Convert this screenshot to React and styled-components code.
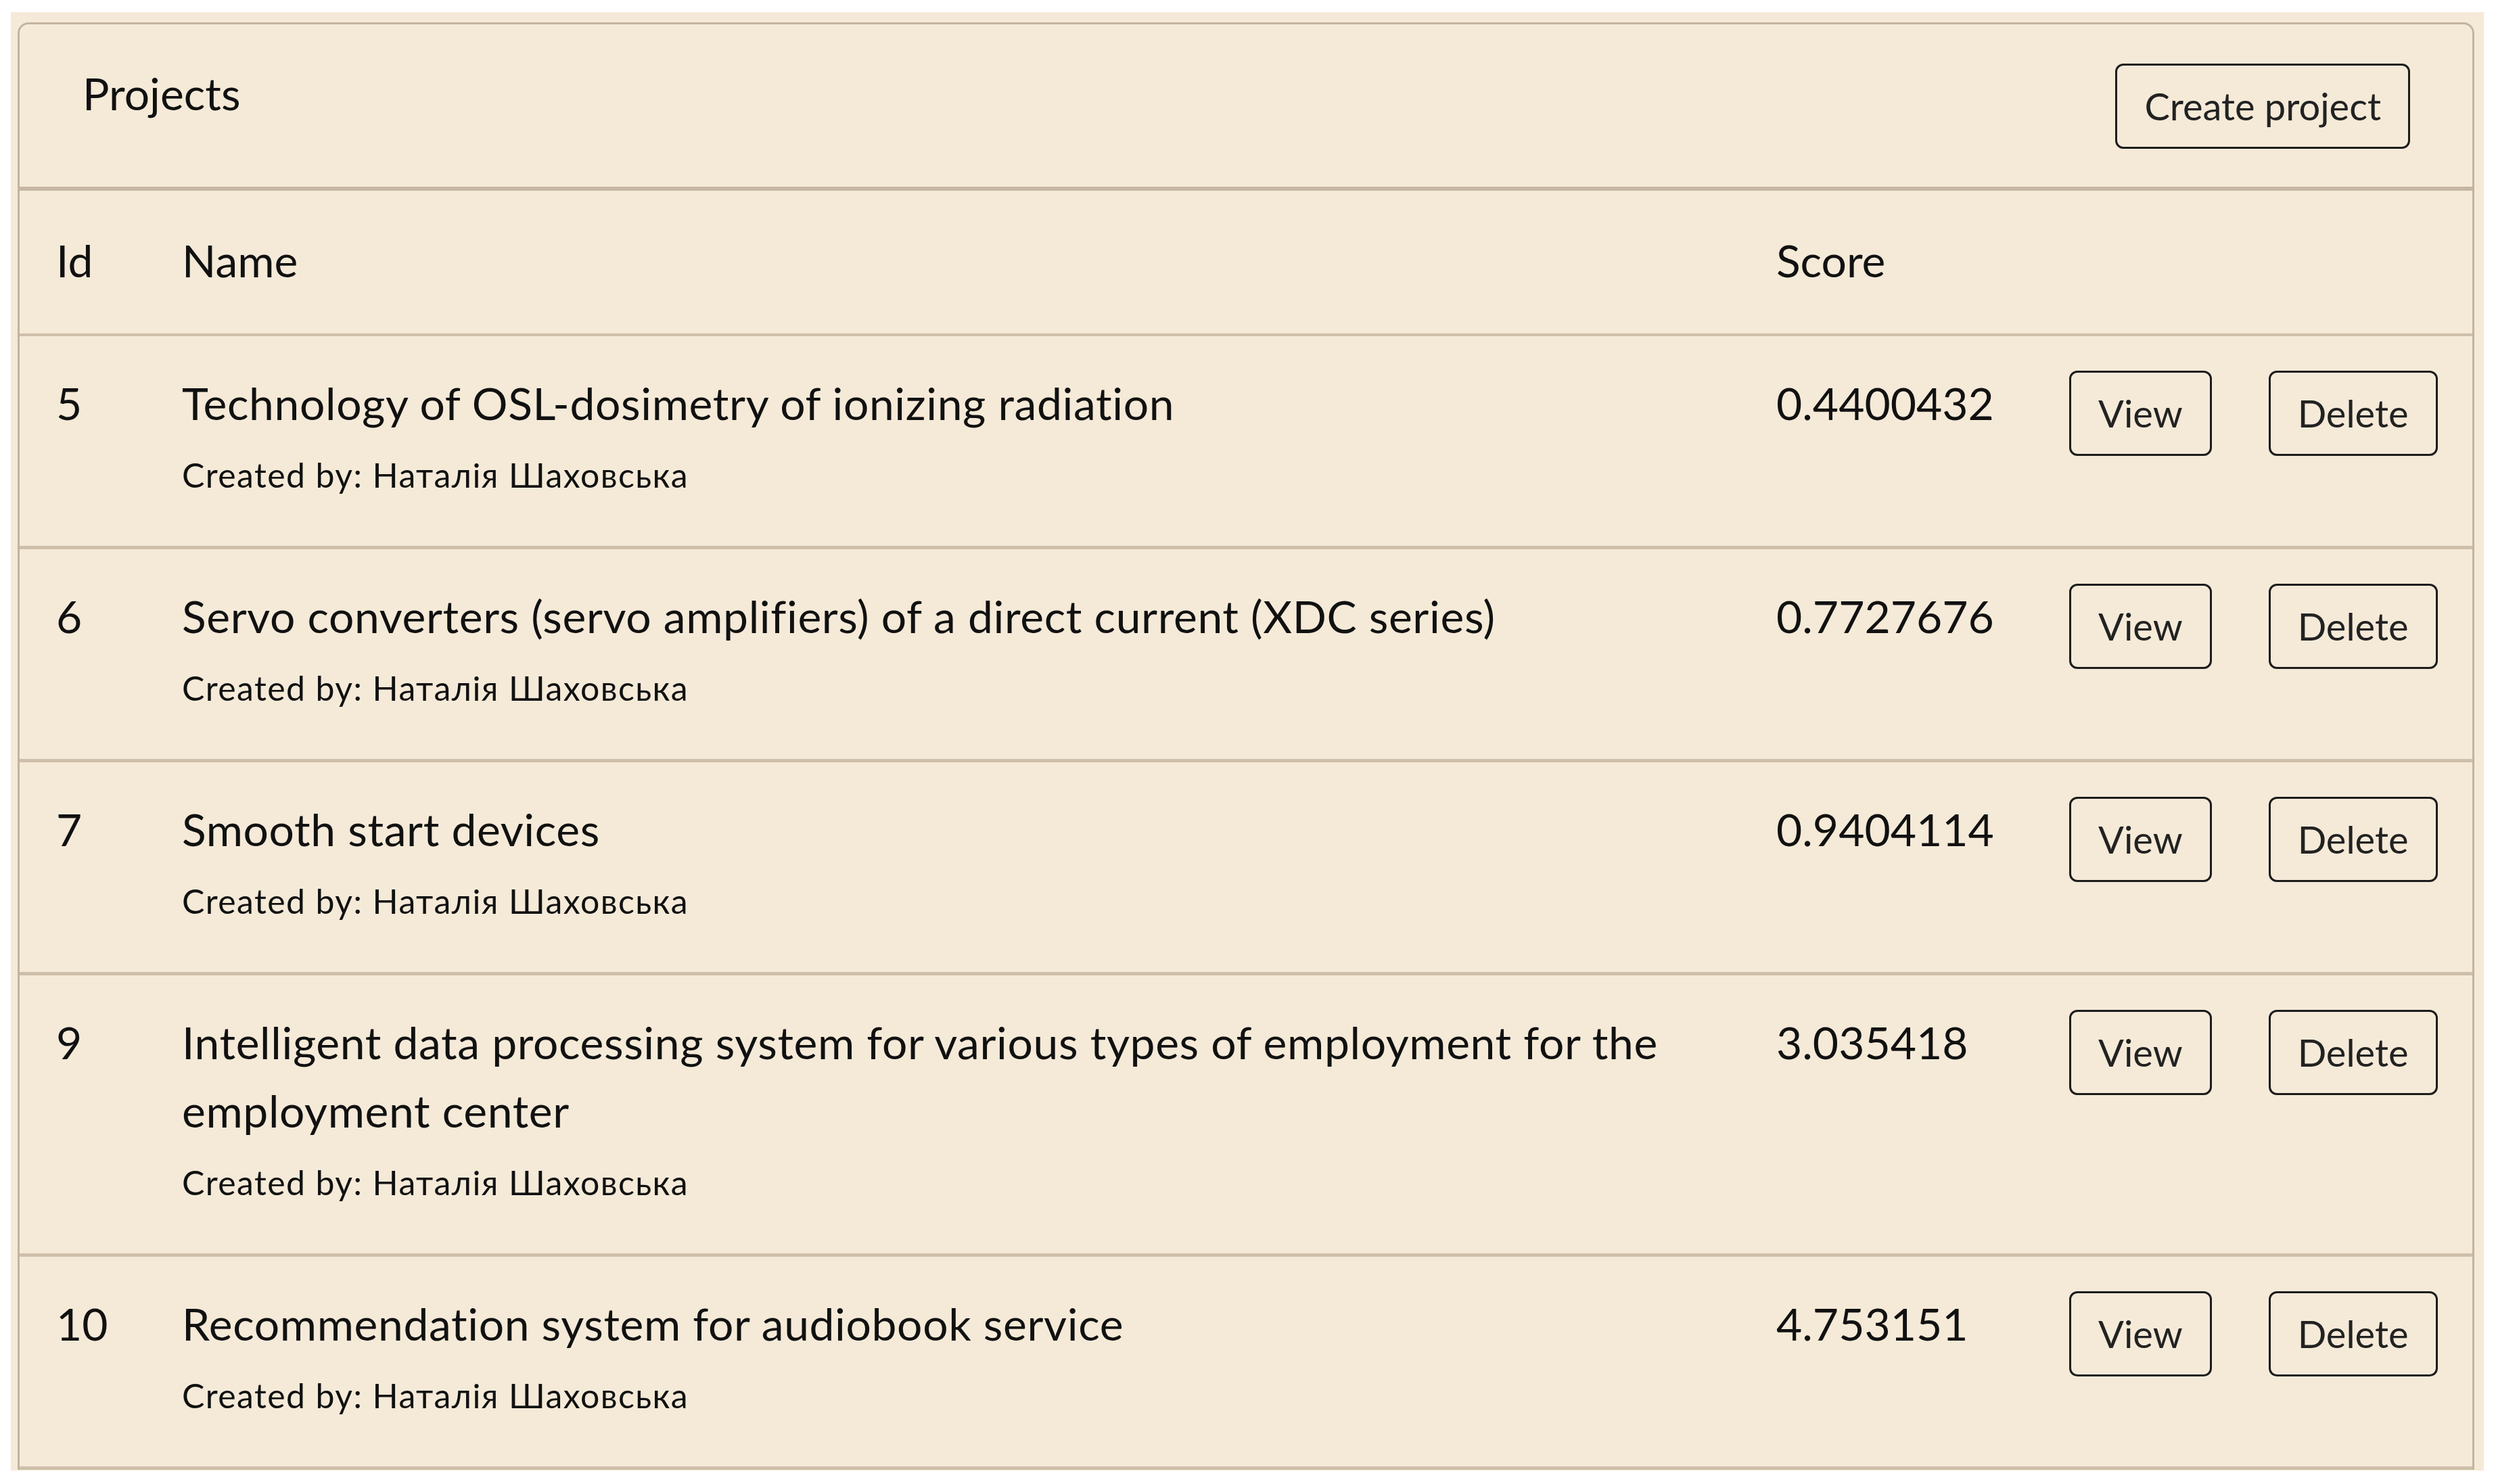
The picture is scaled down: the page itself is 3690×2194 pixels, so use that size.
import styled, { createGlobalStyle } from "styled-components";

const GlobalStyle = createGlobalStyle`
  * {
    box-sizing: border-box;
  }
  html,
  body {
    margin: 0;
    padding: 0;
    background: #ffffff;
  }
  body {
    font-family: "Lato", "Open Sans", "Noto Sans", sans-serif;
    color: #111111;
  }
`;

const Page = styled.div`
  margin: 18px 18px 0 16px;
  padding: 15px 14px 1px 10px;
  background-color: #f5ead8;
`;

const Card = styled.div`
  border: 3px solid #c3b49f;
  border-bottom: none;
  border-radius: 16px 16px 0 0;
`;

const Header = styled.div`
  display: flex;
  justify-content: space-between;
  align-items: flex-start;
  padding: 54px 92px 56px 93px;
  border-bottom: 6px solid #c6b7a2;
`;

const Title = styled.h1`
  margin: 0;
  font-size: 66px;
  font-weight: 400;
  line-height: 96px;
`;

const Button = styled.button`
  font-family: inherit;
  font-size: 56px;
  line-height: 84px;
  color: #222222;
  background: transparent;
  border: 3px solid #1c1c1c;
  border-radius: 12px;
  padding: 18px 40px;
  margin-top: ${(p) => p.$offset || 0}px;
  cursor: pointer;
`;

const Row = styled.div`
  display: grid;
  grid-template-columns: 186px 1fr 433px 539px;
  align-items: start;
  padding: ${(p) => (p.$head ? "52px 57px 58px 54px" : "48px 57px 69px 54px")};
  border-bottom: ${(p) => (p.$head ? 4 : 5)}px solid #cdbfaa;
  font-size: 66px;
  line-height: 101px;
`;

const Cell = styled.div`
  min-width: 0;
`;

const Name = styled.div`
  font-size: 66px;
  line-height: 101px;
  letter-spacing: 0.6px;
`;

const Author = styled.div`
  margin-top: 20px;
  font-size: 50px;
  line-height: 72px;
  letter-spacing: 1.4px;
`;

const Actions = styled.div`
  display: flex;
  gap: 84px;
  align-items: flex-start;
  padding-top: 3px;
`;

const projects = [
  { id: 5, name: "Technology of OSL-dosimetry of ionizing radiation", score: "0.4400432" },
  { id: 6, name: "Servo converters (servo amplifiers) of a direct current (XDC series)", score: "0.7727676" },
  { id: 7, name: "Smooth start devices", score: "0.9404114" },
  {
    id: 9,
    name: "Intelligent data processing system for various types of employment for the employment center",
    score: "3.035418",
  },
  { id: 10, name: "Recommendation system for audiobook service", score: "4.753151" },
];

const App = () => {
  return (
    <>
      <GlobalStyle />
      <Page>
        <Card>
          <Header>
            <Title>Projects</Title>
            <Button $offset={4}>Create project</Button>
          </Header>
          <Row $head>
            <Cell>Id</Cell>
            <Cell>Name</Cell>
            <Cell>Score</Cell>
            <Cell />
          </Row>
          {projects.map((p) => (
            <Row key={p.id}>
              <Cell>{p.id}</Cell>
              <Cell>
                <Name>{p.name}</Name>
                <Author>Created by: Наталія Шаховська</Author>
              </Cell>
              <Cell>{p.score}</Cell>
              <Actions>
                <Button>View</Button>
                <Button>Delete</Button>
              </Actions>
            </Row>
          ))}
        </Card>
      </Page>
    </>
  );
};

export default App;
